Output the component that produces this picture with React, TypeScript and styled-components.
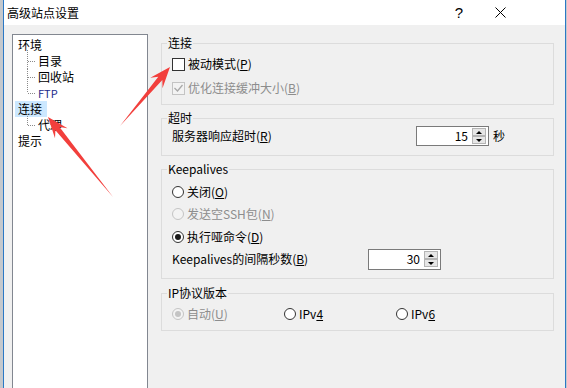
import React from 'react'
import styled, { createGlobalStyle } from 'styled-components'

const GlobalStyle = createGlobalStyle`
  html, body {
    margin: 0;
    padding: 0;
  }
  body {
    width: 567px;
    height: 388px;
    overflow: hidden;
    font-family: "Noto Sans CJK SC", "Liberation Sans", sans-serif;
    font-size: 12px;
    color: #000;
  }
`

const Screen = styled.div`
  position: relative;
  width: 567px;
  height: 388px;
  box-sizing: border-box;
  padding-left: 3px;
  display: flex;
  background: #c4c8cd;
  overflow: hidden;
`

const Window = styled.div`
  width: 563px;
  height: 100%;
  flex: none;
  box-sizing: border-box;
  border-left: 1px solid #2b78c5;
  border-right: 1px solid #2b78c5;
  display: flex;
  flex-direction: column;
  background: #f0f0f0;
`

const TitleBar = styled.div`
  height: 25px;
  flex: none;
  display: flex;
  align-items: center;
  padding-left: 3px;
  background: #fff;
`

const Title = styled.span`
  flex: 1;
  line-height: 16px;
`

const CaptionButton = styled.span<{ $gapRight: number }>`
  width: 20px;
  height: 20px;
  margin-right: ${p => p.$gapRight}px;
  display: flex;
  align-items: center;
  justify-content: center;
  font-family: "Liberation Sans", sans-serif;
  font-size: 15px;
  line-height: 20px;
`

const Body = styled.div`
  flex: 1;
  min-height: 0;
  display: flex;
  padding: 9px 0 0 8px;
`

const Tree = styled.div`
  width: 136px;
  height: 380px;
  flex: none;
  box-sizing: border-box;
  border: 1px solid #828790;
  background: #fff;
  padding: 2px 0 0 2px;
  display: flex;
  flex-direction: column;
`

const TreeRow = styled.div`
  height: 16px;
  display: flex;
  align-items: center;
`

const TreeLabel = styled.span<{ $selected?: boolean; $color?: string; $size?: number }>`
  height: 16px;
  line-height: 16px;
  padding: 0 5px 0 3px;
  background: ${p => (p.$selected ? '#cce8ff' : 'transparent')};
  color: ${p => p.$color || '#000'};
  font-size: ${p => p.$size || 12}px;
`

const Connector = styled.svg`
  width: 20px;
  height: 16px;
  flex: none;
  overflow: visible;
`

const Panel = styled.div`
  width: 393px;
  margin-left: 13px;
  padding-top: 9px;
  display: flex;
  flex-direction: column;
`

const Group = styled.div<{ $height: number; $top: number; $pad: number }>`
  position: relative;
  height: ${p => p.$height}px;
  margin-top: ${p => p.$top}px;
  box-sizing: border-box;
  border: 1px solid #dcdcdc;
  padding: ${p => p.$pad}px 0 0 10px;
  display: flex;
  flex-direction: column;
`

const Legend = styled.span`
  position: absolute;
  top: -9px;
  left: 5px;
  padding: 0 1px;
  line-height: 16px;
  background: #f0f0f0;
`

const Row = styled.div<{ $height: number; $top?: number }>`
  height: ${p => p.$height}px;
  margin-top: ${p => p.$top || 0}px;
  display: flex;
  align-items: center;
`

const Cell = styled.div<{ $width: number }>`
  width: ${p => p.$width}px;
  flex: none;
  display: flex;
  align-items: center;
`

const Text = styled.span<{ $disabled?: boolean }>`
  line-height: 16px;
  white-space: nowrap;
  color: ${p => (p.$disabled ? '#8d8d8d' : '#000')};
`

const Accel = styled.span`
  text-decoration: underline;
  text-underline-offset: 1px;
`

const CheckBox = styled.span<{ $disabled?: boolean }>`
  width: 13px;
  height: 13px;
  flex: none;
  box-sizing: border-box;
  margin-right: 3px;
  border: 1px solid ${p => (p.$disabled ? '#c4c4c4' : '#333')};
  background: ${p => (p.$disabled ? '#f3f3f3' : '#fff')};
  display: flex;
  align-items: center;
  justify-content: center;
`

const Radio = styled.span<{ $disabled?: boolean; $checked?: boolean }>`
  width: 12px;
  height: 12px;
  flex: none;
  box-sizing: border-box;
  margin-right: 3px;
  border-radius: 50%;
  border: 1px solid ${p => (p.$disabled ? '#c4c4c4' : '#333')};
  background: ${p => (p.$disabled ? '#f3f3f3' : '#fff')};
  display: flex;
  align-items: center;
  justify-content: center;

  &::after {
    content: '';
    display: ${p => (p.$checked ? 'block' : 'none')};
    width: 6px;
    height: 6px;
    border-radius: 50%;
    background: ${p => (p.$disabled ? '#c4c4c4' : '#1a1a1a')};
  }
`

const Spin = styled.div<{ $height: number }>`
  width: 73px;
  height: ${p => p.$height}px;
  flex: none;
  box-sizing: border-box;
  border: 1px solid #7a7a7a;
  background: #fff;
  padding-right: 2px;
  display: flex;
  align-items: center;
  justify-content: flex-end;
`

const SpinValue = styled.span`
  margin-right: 4px;
  line-height: 16px;
`

const SpinButtons = styled.div`
  display: flex;
  flex-direction: column;
`

const SpinButton = styled.div<{ $down?: boolean }>`
  width: 14px;
  height: 8px;
  box-sizing: border-box;
  border: 1px solid #b4b4b4;
  background: #e6e6e6;
  display: flex;
  align-items: center;
  justify-content: center;

  &::after {
    content: '';
    width: 0;
    height: 0;
    border-left: 3px solid transparent;
    border-right: 3px solid transparent;
    ${p => (p.$down ? 'border-top: 3px solid #000;' : 'border-bottom: 3px solid #000;')}
  }
`

const Unit = styled.span`
  margin-left: 4px;
  line-height: 16px;
`

const Overlay = styled.svg`
  position: absolute;
  left: 0;
  top: 0;
  width: 567px;
  height: 388px;
  pointer-events: none;
`

const arrowPoints = (tx: number, ty: number, px: number, py: number) => {
  const headLen = 21
  const headHalf = 8
  const neckHalf = 2.6
  const dx = px - tx
  const dy = py - ty
  const len = Math.hypot(dx, dy)
  const ux = dx / len
  const uy = dy / len
  const nx = -uy
  const ny = ux
  const bx = px - ux * headLen
  const by = py - uy * headLen
  const kx = px - ux * (headLen - 6)
  const ky = py - uy * (headLen - 6)
  const pts = [
    [tx, ty],
    [kx + nx * neckHalf, ky + ny * neckHalf],
    [bx + nx * headHalf, by + ny * headHalf],
    [px, py],
    [bx - nx * headHalf, by - ny * headHalf],
    [kx - nx * neckHalf, ky - ny * neckHalf],
  ]
  return pts.map(([x, y]) => `${x.toFixed(1)},${y.toFixed(1)}`).join(' ')
}

const Check = () => (
  <svg width='9' height='8' viewBox='0 0 9 8'>
    <polyline points='0.5,4 3.5,7 8.5,1' fill='none' stroke='#a8a8a8' strokeWidth='1.3' />
  </svg>
)

const CloseIcon = () => (
  <svg width='11' height='11' viewBox='0 0 11 11'>
    <path d='M0.5 0.5 L10.5 10.5 M10.5 0.5 L0.5 10.5' stroke='#000' strokeWidth='1' />
  </svg>
)

const Branch = ({ first, last }: { first?: boolean; last?: boolean }) => (
  <Connector viewBox='0 0 20 16'>
    <line x1='12.5' y1={first ? -3 : 0} x2='12.5' y2={last ? 8 : 16} stroke='#8a8a8a' strokeDasharray='1 1' />
    <line x1='13' y1='8.5' x2='21' y2='8.5' stroke='#8a8a8a' strokeDasharray='1 1' />
  </Connector>
)

const SpinBox = ({ value, height }: { value: string; height: number }) => (
  <Spin $height={height}>
    <SpinValue>{value}</SpinValue>
    <SpinButtons>
      <SpinButton />
      <SpinButton $down />
    </SpinButtons>
  </Spin>
)

const App: React.FC = () => {
  return (
    <>
      <GlobalStyle />
      <Screen>
        <Window>
          <TitleBar>
            <Title>高级站点设置</Title>
            <CaptionButton $gapRight={21}>?</CaptionButton>
            <CaptionButton $gapRight={55}>
              <CloseIcon />
            </CaptionButton>
          </TitleBar>
          <Body>
            <Tree>
              <TreeRow>
                <TreeLabel>环境</TreeLabel>
              </TreeRow>
              <TreeRow>
                <Branch first />
                <TreeLabel>目录</TreeLabel>
              </TreeRow>
              <TreeRow>
                <Branch />
                <TreeLabel>回收站</TreeLabel>
              </TreeRow>
              <TreeRow>
                <Branch last />
                <TreeLabel $color='#1b2a8c' $size={11}>FTP</TreeLabel>
              </TreeRow>
              <TreeRow>
                <TreeLabel $selected>连接</TreeLabel>
              </TreeRow>
              <TreeRow>
                <Branch first last />
                <TreeLabel>代理</TreeLabel>
              </TreeRow>
              <TreeRow>
                <TreeLabel>提示</TreeLabel>
              </TreeRow>
            </Tree>

            <Panel>
              <Group $height={62} $top={0} $pad={8}>
                <Legend>连接</Legend>
                <Row $height={24}>
                  <CheckBox />
                  <Text>
                    被动模式(<Accel>P</Accel>)
                  </Text>
                </Row>
                <Row $height={24}>
                  <CheckBox $disabled>
                    <Check />
                  </CheckBox>
                  <Text $disabled>
                    优化连接缓冲大小(<Accel>B</Accel>)
                  </Text>
                </Row>
              </Group>

              <Group $height={38} $top={13} $pad={7}>
                <Legend>超时</Legend>
                <Row $height={20}>
                  <Cell $width={244}>
                    <Text>
                      服务器响应超时(<Accel>R</Accel>)
                    </Text>
                  </Cell>
                  <SpinBox value='15' height={20} />
                  <Unit>秒</Unit>
                </Row>
              </Group>

              <Group $height={110} $top={13} $pad={11}>
                <Legend>Keepalives</Legend>
                <Row $height={22}>
                  <Radio />
                  <Text>
                    关闭(<Accel>O</Accel>)
                  </Text>
                </Row>
                <Row $height={22}>
                  <Radio $disabled />
                  <Text $disabled>
                    发送空SSH包(<Accel>N</Accel>)
                  </Text>
                </Row>
                <Row $height={22} $top={1}>
                  <Radio $checked />
                  <Text>
                    执行哑命令(<Accel>D</Accel>)
                  </Text>
                </Row>
                <Row $height={22}>
                  <Cell $width={196}>
                    <Text>
                      Keepalives的间隔秒数(<Accel>B</Accel>)
                    </Text>
                  </Cell>
                  <SpinBox value='30' height={21} />
                </Row>
              </Group>

              <Group $height={38} $top={14} $pad={9}>
                <Legend>IP协议版本</Legend>
                <Row $height={22}>
                  <Cell $width={112}>
                    <Radio $disabled $checked />
                    <Text $disabled>
                      自动(<Accel>U</Accel>)
                    </Text>
                  </Cell>
                  <Cell $width={112}>
                    <Radio />
                    <Text>
                      IPv<Accel>4</Accel>
                    </Text>
                  </Cell>
                  <Cell $width={112}>
                    <Radio />
                    <Text>
                      IPv<Accel>6</Accel>
                    </Text>
                  </Cell>
                </Row>
              </Group>
            </Panel>
          </Body>
        </Window>

        <Overlay viewBox='0 0 567 388'>
          <polygon points={arrowPoints(120, 126, 170, 67)} fill='#f23f3c' />
          <polygon points={arrowPoints(113, 197, 48, 117)} fill='#f23f3c' />
        </Overlay>
      </Screen>
    </>
  )
}

export default App
